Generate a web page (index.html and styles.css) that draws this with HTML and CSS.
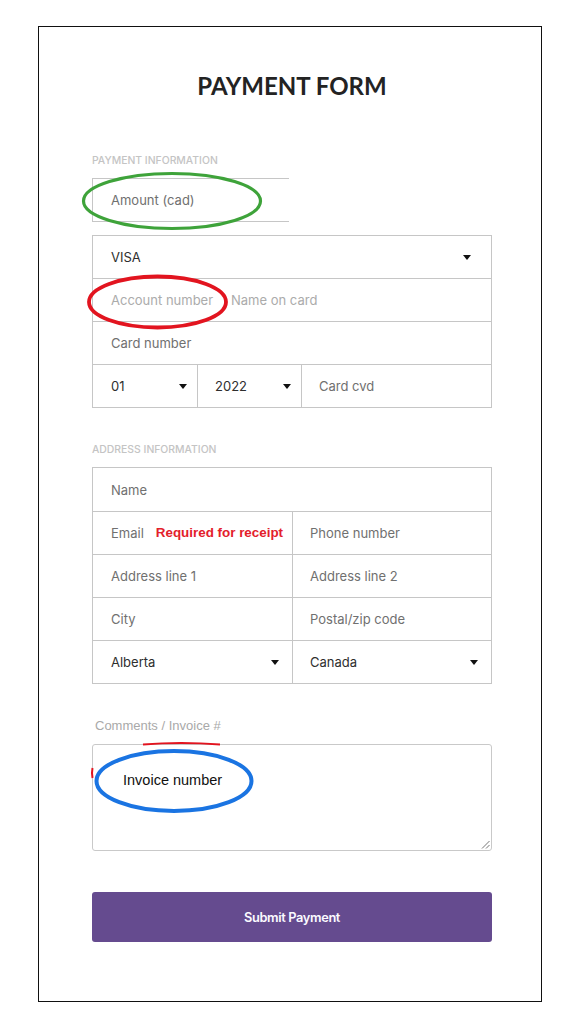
FILE: index.html
```html
<!DOCTYPE html>
<html>
<head>
<meta charset="utf-8">
<link rel="stylesheet" href="styles.css">
</head>
<body>
<div class="frame">
  <h1 class="title">PAYMENT FORM</h1>

  <div class="section-label">PAYMENT INFORMATION</div>
  <div class="amount"><span class="ph">Amount (cad)</span></div>

  <div class="box">
    <div class="row first select-row"><span class="val">VISA</span><span class="caret"></span></div>
    <div class="row"><span class="ph light account">Account number</span><span class="ph light">Name on card</span></div>
    <div class="row"><span class="ph">Card number</span></div>
    <div class="row expiry">
      <div class="cell c1 select-cell"><span class="val">01</span><span class="caret"></span></div>
      <div class="cell c2 select-cell"><span class="val">2022</span><span class="caret"></span></div>
      <div class="cell c3"><span class="ph">Card cvd</span></div>
    </div>
  </div>

  <div class="section-label second">ADDRESS INFORMATION</div>
  <div class="box address">
    <div class="row first tall"><span class="ph">Name</span></div>
    <div class="row split">
      <div class="cell left"><span class="ph">Email</span><span class="req">Required for receipt</span></div>
      <div class="cell right"><span class="ph">Phone number</span></div>
    </div>
    <div class="row split">
      <div class="cell left"><span class="ph">Address line 1</span></div>
      <div class="cell right"><span class="ph">Address line 2</span></div>
    </div>
    <div class="row split">
      <div class="cell left"><span class="ph">City</span></div>
      <div class="cell right"><span class="ph">Postal/zip code</span></div>
    </div>
    <div class="row split">
      <div class="cell left select-cell"><span class="val">Alberta</span><span class="caret"></span></div>
      <div class="cell right select-cell"><span class="val">Canada</span><span class="caret"></span></div>
    </div>
  </div>

  <div class="comments-label">Comments / Invoice #</div>
  <div class="textarea">
    <span class="typed">Invoice number</span>
    <svg class="grip" width="9" height="9" viewBox="0 0 9 9"><path d="M8.5 1 L1 8.5 M8.5 5 L5 8.5" stroke="#777" stroke-width="1" fill="none"/></svg>
  </div>

  <div class="submit">Submit Payment</div>
</div>

<svg class="marks" width="580" height="1024" viewBox="0 0 580 1024">
  <ellipse cx="172" cy="201" rx="88.5" ry="27.5" fill="none" stroke="#3ea33a" stroke-width="3.2"/>
  <ellipse cx="157.5" cy="302" rx="68.5" ry="25.5" fill="none" stroke="#e2141f" stroke-width="3.8"/>
  <ellipse cx="174" cy="781" rx="77.5" ry="30" fill="none" stroke="#1a74e2" stroke-width="4"/>
  <path d="M143 744.5 Q181 741.5 220 744.5" fill="none" stroke="#e2141f" stroke-width="2"/>
  <path d="M92.5 768 Q91.5 773 92.5 778" fill="none" stroke="#e2141f" stroke-width="2"/>
</svg>
</body>
</html>
```

FILE: styles.css
```css
html, body {
  margin: 0;
  padding: 0;
  background: #ffffff;
}

body {
  position: relative;
  width: 580px;
  height: 1024px;
  overflow: hidden;
  font-family: "Inter", "Liberation Sans", sans-serif;
}

.frame {
  margin: 26px 0 0 38px;
  width: 449px;
  height: 930px;
  border: 1px solid #111;
  padding: 44px 0 0 53px;
  box-sizing: content-box;
}

.title {
  margin: 0;
  width: 400px;
  text-align: center;
  font-family: "Lato", "Liberation Sans", sans-serif;
  font-weight: 700;
  font-size: 24px;
  line-height: 29px;
  color: #232323;
}

.section-label {
  margin-top: 55px;
  margin-bottom: -1px;
  font-family: "Inter", sans-serif;
  font-size: 10.4px;
  line-height: 12px;
  font-weight: 500;
  color: #c4c4c4;
}

.section-label.second {
  margin-top: 36px;
}

.amount {
  margin-top: 12px;
  width: 197px;
  height: 44px;
  box-sizing: border-box;
  border-top: 1px solid #c6c6c6;
  border-bottom: 1px solid #c6c6c6;
  border-left: 1px solid #c6c6c6;
  padding-left: 18px;
  display: flex;
  align-items: center;
}

.ph, .val {
  font-size: 13px;
  line-height: 16px;
  color: #707070;
  white-space: nowrap;
}

.val {
  color: #2e2e2e;
}

.ph.light {
  color: #ababab;
}

.ph.account {
  width: 120px;
}

.box {
  margin-top: 13px;
  width: 400px;
  box-sizing: border-box;
  border: 1px solid #c6c6c6;
}

.row {
  height: 43px;
  box-sizing: border-box;
  border-top: 1px solid #c6c6c6;
  display: flex;
  align-items: center;
  padding: 0 20px 0 18px;
}

.row.first {
  border-top: 0;
  height: 42px;
}

.row.first.tall {
  height: 43px;
}

.select-row {
  justify-content: space-between;
}

.caret {
  width: 0;
  height: 0;
  border-left: 4.5px solid transparent;
  border-right: 4.5px solid transparent;
  border-top: 5px solid #111;
}

.row.expiry {
  display: grid;
  grid-template-columns: 104px 104px 1fr;
  padding: 0;
  align-items: stretch;
}

.cell {
  display: flex;
  align-items: center;
  box-sizing: border-box;
}

.expiry .c1 {
  padding: 0 10px 0 18px;
}

.expiry .c2 {
  border-left: 1px solid #c6c6c6;
  padding: 0 10px 0 17px;
}

.expiry .c3 {
  border-left: 1px solid #c6c6c6;
  padding: 0 0 0 17px;
}

.select-cell {
  justify-content: space-between;
}

.address {
  margin-top: 12px;
}

.row.split {
  display: grid;
  grid-template-columns: 199px 1fr;
  padding: 0;
  align-items: stretch;
}

.split .left {
  padding: 0 13px 0 18px;
}

.split .right {
  border-left: 1px solid #c6c6c6;
  padding: 0 13px 0 17px;
}

.req {
  margin-left: 12px;
  font-family: "Liberation Sans", sans-serif;
  font-weight: 700;
  font-size: 13.4px;
  line-height: 16px;
  color: #e3202b;
  white-space: nowrap;
}

.comments-label {
  margin-top: 34px;
  padding-left: 3px;
  font-family: "Liberation Sans", sans-serif;
  font-size: 13px;
  line-height: 15px;
  color: #a9a9a9;
}

.textarea {
  position: relative;
  margin-top: 11px;
  width: 400px;
  height: 107px;
  box-sizing: border-box;
  border: 1px solid #c9c9c9;
  border-radius: 3px;
  padding: 24px 0 0 30px;
  background: #fff;
}

.typed {
  font-family: "Liberation Sans", sans-serif;
  font-size: 14.5px;
  line-height: 17px;
  color: #111;
}

.grip {
  position: absolute;
  right: 1px;
  bottom: 1px;
}

.submit {
  margin-top: 41px;
  width: 400px;
  height: 50px;
  border-radius: 3px;
  background: #654b8f;
  color: #fbfaff;
  display: flex;
  align-items: center;
  justify-content: center;
  font-family: "Inter", sans-serif;
  font-weight: 600;
  font-size: 12.8px;
  letter-spacing: -0.35px;
}

.marks {
  position: absolute;
  left: 0;
  top: 0;
  pointer-events: none;
}
```
